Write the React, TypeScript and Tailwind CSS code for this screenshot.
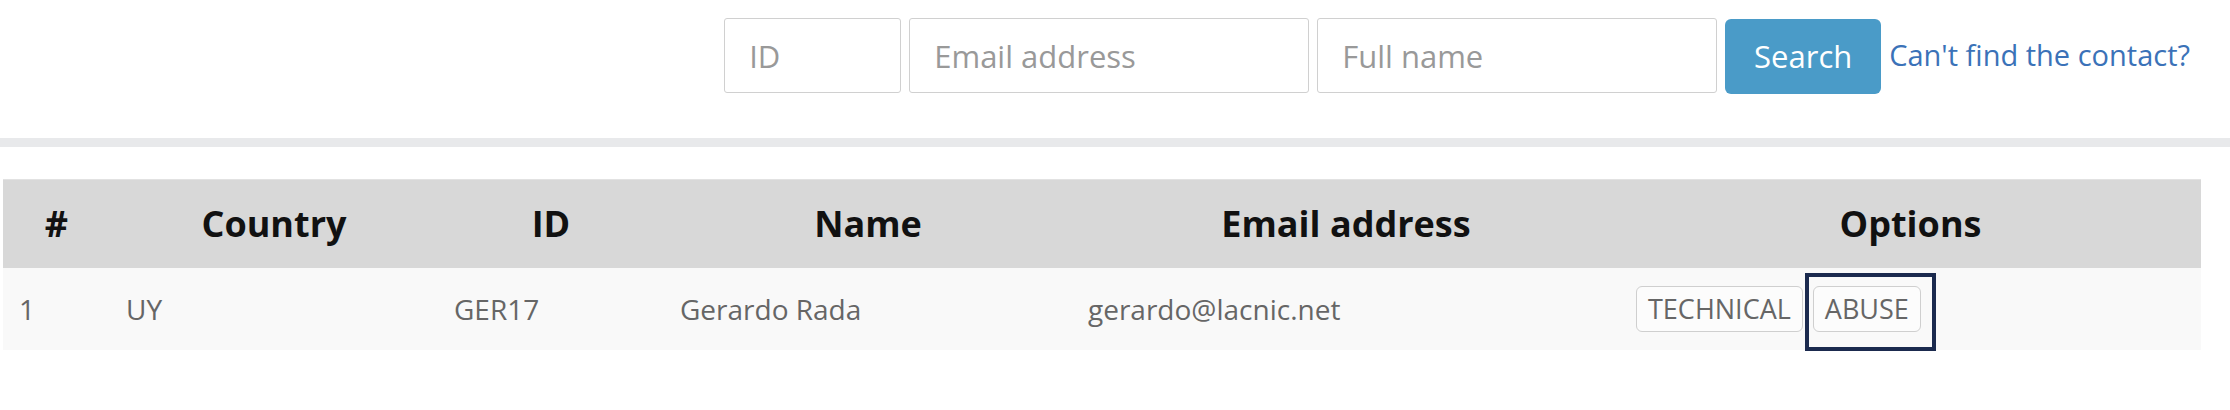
const font = { fontFamily: '"Open Sans", "Liberation Sans", sans-serif' };

type Contact = {
  n: number;
  country: string;
  id: string;
  name: string;
  email: string;
};

const contacts: Contact[] = [
  { n: 1, country: "UY", id: "GER17", name: "Gerardo Rada", email: "gerardo@lacnic.net" },
];

function OptionButton({ label }: { label: string }) {
  return (
    <button className="h-[46px] px-[11px] rounded-[6px] border border-[#cfcfcf] bg-[#fcfcfc] text-[27px] text-[#666] leading-none">
      {label}
    </button>
  );
}

export default function App() {
  return (
    <div className="w-[2230px] h-[410px] bg-white" style={font}>
      {/* search bar */}
      <div className="h-[138px] flex justify-end items-start pt-[18px] pr-[40px] gap-2">
        <input
          placeholder="ID"
          className="w-[177px] h-[75px] px-6 border border-[#d0d0d0] rounded-[3px] text-[31px] placeholder:text-[#999] outline-none"
        />
        <input
          placeholder="Email address"
          className="w-[400px] h-[75px] px-6 border border-[#d0d0d0] rounded-[3px] text-[31px] placeholder:text-[#999] outline-none"
        />
        <input
          placeholder="Full name"
          className="w-[400px] h-[75px] px-6 border border-[#d0d0d0] rounded-[3px] text-[31px] placeholder:text-[#999] outline-none"
        />
        <button className="mt-px w-[156px] h-[75px] rounded-[6px] bg-[#4a9bc8] text-white text-[31px]">
          Search
        </button>
        <div className="h-[75px] flex items-center">
          <a href="#" className="-mt-[1px] text-[29px] text-[#3b72b8] whitespace-nowrap">
            Can't find the contact?
          </a>
        </div>
      </div>
      <div className="h-[9px] bg-[#e8e9eb]" />

      {/* results */}
      <table className="mt-[32px] ml-[3px] w-[2198px] table-fixed border-collapse">
        <colgroup>
          <col className="w-[107px]" />
          <col className="w-[328px]" />
          <col className="w-[226px]" />
          <col className="w-[408px]" />
          <col className="w-[548px]" />
          <col className="w-[581px]" />
        </colgroup>
        <thead>
          <tr className="h-[88px] bg-[#d8d8d8] border-t border-[#e2e2e2] text-[36px] font-bold text-[#111]">
            <th className="px-4 text-center">#</th>
            <th className="px-4 text-center">Country</th>
            <th className="px-4 text-center">ID</th>
            <th className="px-4 text-center">Name</th>
            <th className="px-4 text-center">Email address</th>
            <th className="px-4 text-center">Options</th>
          </tr>
        </thead>
        <tbody>
          {contacts.map((c) => (
            <tr key={c.n} className="h-[82px] bg-[#f9f9f9] text-[28px] text-[#666]">
              <td className="px-4">{c.n}</td>
              <td className="px-4">{c.country}</td>
              <td className="px-4">{c.id}</td>
              <td className="px-4">{c.name}</td>
              <td className="px-4">{c.email}</td>
              <td className="px-4">
                <div className="flex items-center gap-[10px]">
                  <OptionButton label="TECHNICAL" />
                  <span className="relative flex">
                    <OptionButton label="ABUSE" />
                    <span className="absolute -left-2 -right-[15px] -top-[13px] -bottom-[19px] border-4 border-[#1b2a4e] pointer-events-none" />
                  </span>
                </div>
              </td>
            </tr>
          ))}
        </tbody>
      </table>
    </div>
  );
}
